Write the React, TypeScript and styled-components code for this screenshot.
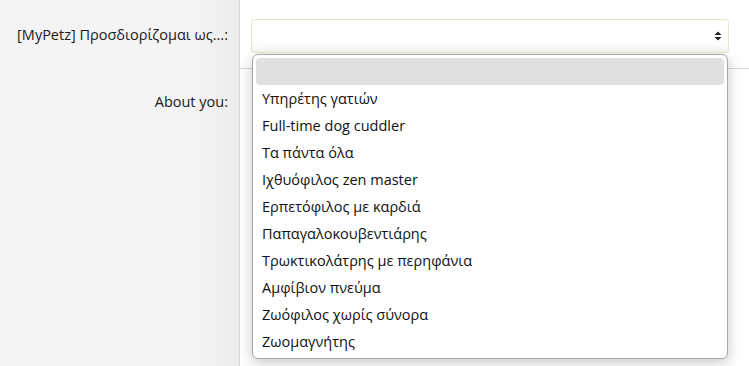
import React from "react";
import styled, { createGlobalStyle } from "styled-components";

const Global = createGlobalStyle`
  html, body { margin: 0; padding: 0; background: #fff; }
  body { font-family: "Open Sans", "Noto Sans", "DejaVu Sans", sans-serif; }
`;

const Page = styled.div`
  display: grid;
  grid-template-columns: 240px 1fr;
  width: 749px;
  height: 366px;
  overflow: hidden;
`;

const LabelCol = styled.div`
  background: linear-gradient(to right, #f4f4f4 0%, #f4f4f4 82%, #ececec 100%);
  border-right: 1px solid #d6d6d6;
  display: flex;
  flex-direction: column;
`;

const Label = styled.div<{ $h: number }>`
  height: ${(p) => p.$h}px;
  display: flex;
  align-items: center;
  justify-content: flex-end;
  padding-right: 11px;
  font-size: 14.5px;
  color: #1a1a1a;
`;

const FieldCol = styled.div`
  display: flex;
  flex-direction: column;
  background: #fff;
`;

const FieldRow = styled.div<{ $h: number; $line?: boolean }>`
  height: ${(p) => p.$h}px;
  padding: 19px 20px 0 11px;
  box-sizing: border-box;
  border-bottom: ${(p) => (p.$line ? "1px solid #d9d9d9" : "none")};
  position: relative;
`;

const SelectBox = styled.div`
  height: 34px;
  box-sizing: border-box;
  border: 1px solid #dfecc9;
  border-radius: 3px;
  background: linear-gradient(to bottom, #ffffff 60%, #f8f8f8 100%);
  display: flex;
  align-items: center;
  justify-content: flex-end;
  padding-right: 6px;
`;

const Popup = styled.div`
  position: absolute;
  left: 12px;
  top: 54px;
  width: 476px;
  box-sizing: border-box;
  background: #fff;
  border: 1px solid #a8a8a8;
  border-radius: 6px;
  box-shadow: 0 4px 14px rgba(0, 0, 0, 0.22);
  padding: 3px;
  z-index: 5;
`;

const Option = styled.div<{ $active?: boolean }>`
  height: 27px;
  display: flex;
  align-items: center;
  padding-left: 6px;
  border-radius: 4px;
  background: ${(p) => (p.$active ? "#e0e0e0" : "transparent")};
  font-size: 14.5px;
  color: #111;
`;

const options = [
  "",
  "Υπηρέτης γατιών",
  "Full-time dog cuddler",
  "Τα πάντα όλα",
  "Ιχθυόφιλος zen master",
  "Ερπετόφιλος με καρδιά",
  "Παπαγαλοκουβεντιάρης",
  "Τρωκτικολάτρης με περηφάνια",
  "Αμφίβιον πνεύμα",
  "Ζωόφιλος χωρίς σύνορα",
  "Ζωομαγνήτης",
];

const Arrows = () => (
  <svg width="8" height="10" viewBox="0 0 8 10">
    <path d="M4 0.5 L7.5 4 L0.5 4 Z" fill="#222" />
    <path d="M4 9.5 L7.5 6 L0.5 6 Z" fill="#222" />
  </svg>
);

export default function App() {
  return (
    <Page>
      <Global />
      <LabelCol>
        <Label $h={69}>[MyPetz] Προσδιορίζομαι ως...:</Label>
        <Label $h={64}>About you:</Label>
      </LabelCol>
      <FieldCol>
        <FieldRow $h={69} $line>
          <SelectBox>
            <Arrows />
          </SelectBox>
          <Popup>
            {options.map((o, i) => (
              <Option key={i} $active={i === 0}>
                {o}
              </Option>
            ))}
          </Popup>
        </FieldRow>
        <FieldRow $h={64} />
      </FieldCol>
    </Page>
  );
}
